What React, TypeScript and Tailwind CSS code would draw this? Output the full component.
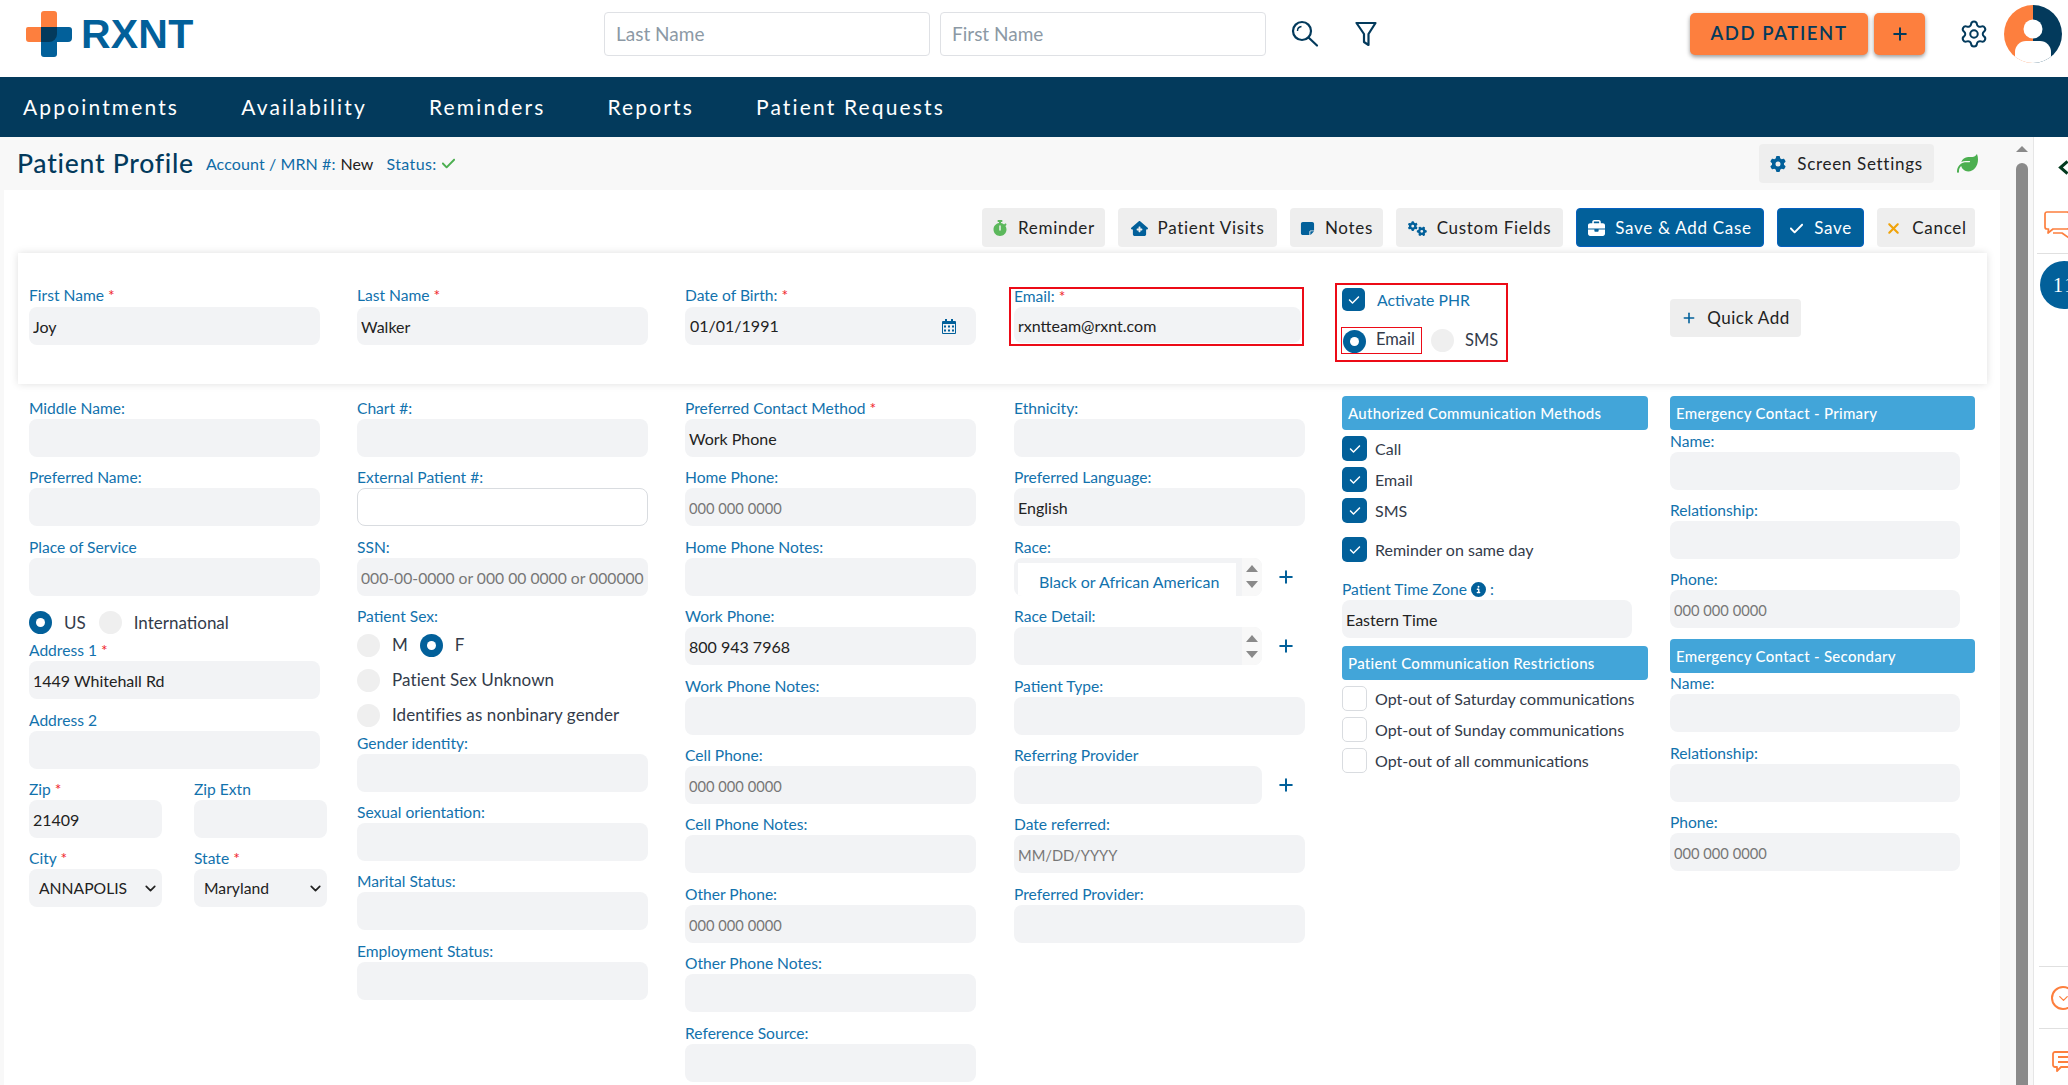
import React from "react";
import { Plus, Settings, ChevronDown } from "lucide-react";
import { FaStopwatch, FaHouseMedical, FaNoteSticky, FaGears, FaBriefcase, FaCheck, FaXmark, FaGear, FaLeaf, FaCircleInfo } from "react-icons/fa6";

function Label({ text, req, tall }: { text: string; req?: boolean; tall?: boolean }) {
  return (
    <div className={`text-[15.6px] leading-[21px] text-[#1272ad] whitespace-nowrap ${tall ? "h-[22px]" : "h-[21px]"}`}>
      {text}
      {req && <span className="text-[#f0262c]"> *</span>}
    </div>
  );
}

function Box({ value, placeholder, white, ssn, short }: { value?: string; placeholder?: string; white?: boolean; ssn?: boolean; short?: boolean }) {
  return (
    <input
      readOnly
      value={value ?? ""}
      placeholder={placeholder}
      className={`rounded-lg pl-[4px] pt-[1px] text-[16px] text-[#222] placeholder:text-[#777] outline-none block w-full ${short ? "h-[36px]" : "h-[38px]"} ${ssn ? "placeholder:text-[15.7px]" : "placeholder:text-[14.700px]"} ${white ? "bg-white border border-[#d9dce0]" : "bg-[#f2f3f5]"}`}
    />
  );
}

function Field({ label, req, value, placeholder, white, ssn, tall }: { label: string; req?: boolean; value?: string; placeholder?: string; white?: boolean; ssn?: boolean; tall?: boolean }) {
  return (
    <div className="h-[69.4px]">
      <Label text={label} req={req} tall={tall} />
      <Box value={value} placeholder={placeholder} white={white} ssn={ssn} />
    </div>
  );
}

function Radio({ on }: { on?: boolean }) {
  return (
    <span className={`w-[23px] h-[23px] rounded-full shrink-0 flex items-center justify-center ${on ? "bg-[#02609a]" : "bg-[#efefef]"}`}>
      {on && <span className="w-[9px] h-[9px] rounded-full bg-white" />}
    </span>
  );
}

function Check({ on }: { on?: boolean }) {
  return (
    <span className={`w-[25px] h-[25px] rounded-[5px] shrink-0 flex items-center justify-center ${on ? "bg-[#02609a]" : "bg-white border border-[#d9dce0]"}`}>
      {on && <FaCheck className="text-white text-[12px]" />}
    </span>
  );
}

function CheckRow({ on, text, className }: { on?: boolean; text: string; className?: string }) {
  return (
    <div className={`flex items-center gap-[8px] h-[25px] text-[16px] text-[#333b4a] whitespace-nowrap ${className ?? ""}`}>
      <Check on={on} />
      {text}
    </div>
  );
}

function SelectBox({ value }: { value: string }) {
  return (
    <div className="h-[38px] rounded-lg bg-[#f2f3f5] pl-[10px] pr-[3px] pt-[1px] flex items-center justify-between text-[15.7px] text-[#222]">
      {value}
      <ChevronDown size={17} strokeWidth={2.4} className="text-[#222]" />
    </div>
  );
}

function Head({ text }: { text: string }) {
  return (
    <div className="h-[34px] rounded-[4px] bg-[#42a5d9] text-white text-[15px] font-medium leading-[34px] pl-[6px] whitespace-nowrap tracking-[0.3px]">
      {text}
    </div>
  );
}

function Spinner() {
  return (
    <div className="w-[20px] flex flex-col items-center justify-center gap-[9px] bg-[#f8f8f8]">
      <span className="w-0 h-0 border-x-[6px] border-x-transparent border-b-[7px] border-b-[#8a8a8a]" />
      <span className="w-0 h-0 border-x-[6px] border-x-transparent border-t-[7px] border-t-[#8a8a8a]" />
    </div>
  );
}

function Btn({ icon, text, primary, className }: { icon: React.ReactNode; text: string; primary?: boolean; className?: string }) {
  return (
    <div className={`h-[39px] rounded-[4px] pt-[1px] flex items-center justify-center gap-[10px] text-[17px] tracking-[0.7px] whitespace-nowrap ${primary ? "bg-[#02609a] text-white border border-[#0560c0]" : "bg-[#eeeeee] text-[#222]"} ${className ?? ""}`}>
      {icon}
      {text}
    </div>
  );
}

export default function App() {
  return (
    <div className="w-[2068px] h-[1085px] overflow-hidden bg-white flex flex-col font-['Lato','Noto_Sans',sans-serif]">
      {/* Top bar */}
      <header className="h-[77px] shrink-0 flex items-center pl-[26px] pb-[9px] bg-white">
        <div className="w-[578px] flex items-center gap-[9px]">
          <svg width="46" height="46" viewBox="0 0 46 46" className="shrink-0">
            <path d="M18 0h10a3 3 0 0 1 3 3v13H15v15H3a3 3 0 0 1-3-3V18a2 2 0 0 1 2-2h13V3a3 3 0 0 1 3-3z" fill="#fd7f3e" />
            <path d="M15 16h28a3 3 0 0 1 3 3v8a4 4 0 0 1-4 4H31v12a3 3 0 0 1-3 3H18a3 3 0 0 1-3-3z" fill="#02609a" />
            <path d="M15 16h16v7a8 8 0 0 1-8 8h-8z" fill="#033a5c" />
          </svg>
          <span className="text-[41px] leading-none font-bold text-[#02609a] font-['Liberation_Sans',sans-serif] tracking-[0.2px]">RXNT</span>
        </div>
        <input placeholder="Last Name" readOnly className="w-[326px] h-[44px] rounded-[4px] border border-[#dfe1e5] pl-[11px] pb-[1px] text-[19px] placeholder:text-[#8c99a5] outline-none" />
        <input placeholder="First Name" readOnly className="ml-[10px] w-[326px] h-[44px] rounded-[4px] border border-[#dfe1e5] pl-[11px] pb-[1px] text-[19px] placeholder:text-[#8c99a5] outline-none" />
        <svg width="28" height="28" viewBox="0 0 28 28" fill="none" stroke="#033a5c" strokeWidth="2.2" className="ml-[25px] shrink-0">
          <circle cx="11" cy="11" r="9" />
          <path d="M17.500 17.500 26 25.500" strokeLinecap="round" />
          <path d="M6.500 11a4.500 4.500 0 0 1 4-4.500" strokeWidth="1.4" />
        </svg>
        <svg width="22" height="26" viewBox="0 0 22 26" fill="none" stroke="#033a5c" strokeWidth="2.2" strokeLinejoin="round" className="ml-[36px] shrink-0">
          <path d="M1.500 2h19l-7 11v11l-4.500-3v-8z" />
        </svg>
        <div className="ml-[313px] w-[178px] h-[42px] rounded-[5px] bg-[#fd7f3e] shadow-[0_2px_4px_rgba(0,0,0,0.4)] flex items-center justify-center text-[#033a5c] text-[18.500px] font-semibold tracking-[1.6px]">ADD PATIENT</div>
        <div className="ml-[6px] w-[51px] h-[42px] rounded-[5px] bg-[#fd7f3e] shadow-[0_2px_4px_rgba(0,0,0,0.4)] flex items-center justify-center text-[#033a5c]"><Plus size={20} strokeWidth={2.4} /></div>
        <Settings size={30} strokeWidth={1.6} className="ml-[34px] text-[#033a5c]" />
        <svg width="58" height="58" viewBox="0 0 58 58" className="ml-[15px] shrink-0">
          <clipPath id="av"><circle cx="29" cy="29" r="29" /></clipPath>
          <g clipPath="url(#av)">
            <rect width="29" height="58" fill="#fd7f3e" />
            <rect x="29" width="29" height="58" fill="#033a5c" />
            <circle cx="29" cy="24" r="9.5" fill="#fff" />
            <path d="M11 58V47a11 11 0 0 1 11-11h14a11 11 0 0 1 11 11v11z" fill="#fff" />
          </g>
        </svg>
      </header>

      {/* Navigation */}
      <nav className="h-[60px] shrink-0 bg-[#033a5c] pl-[23px] flex items-center gap-[62px] text-white text-[21px] tracking-[2.15px]">
        <span>Appointments</span>
        <span>Availability</span>
        <span>Reminders</span>
        <span>Reports</span>
        <span>Patient Requests</span>
      </nav>

      <div className="flex-1 flex min-h-0">
        <div className="w-[2010px] bg-[#f8f8f8] flex flex-col min-h-0">
          {/* Title bar */}
          <div className="h-[53px] shrink-0 flex items-center pl-[17px] pr-[32px]">
            <span className="text-[26.5px] tracking-[0.75px] text-[#033a5c] font-medium">Patient Profile</span>
            <span className="ml-[12px] text-[16px] tracking-[0.1px] text-[#0f6ba6]">Account / MRN #:</span>
            <span className="ml-[5px] text-[16px] text-[#222]">New</span>
            <span className="ml-[13px] text-[16px] tracking-[0.4px] text-[#0f6ba6]">Status:</span>
            <FaCheck className="ml-[4px] text-[#4caf50] text-[15px]" />
            <div className="ml-auto w-[175px] h-[39px] rounded-[4px] bg-[#eeeeee] flex items-center justify-center gap-[11px] text-[17px] tracking-[0.7px] text-[#222]">
              <FaGear className="text-[#02609a] text-[16px]" /> Screen Settings
            </div>
            <FaLeaf className="ml-[23px] text-[#4caf50] text-[21px]" />
          </div>

          {/* Panel */}
          <main className="flex-1 ml-[4px] w-[1996px] bg-white min-h-0 overflow-hidden">
            <div className="h-[63px] pt-[18px] pr-[25px] flex justify-end gap-[13px]">
              <Btn className="w-[123px]" icon={<FaStopwatch className="text-[#5cb85c] text-[16px]" />} text="Reminder" />
              <Btn className="w-[159px]" icon={<FaHouseMedical className="text-[#02609a] text-[17px]" />} text="Patient Visits" />
              <Btn className="w-[93px]" icon={<FaNoteSticky className="text-[#02609a] text-[15px]" />} text="Notes" />
              <Btn className="w-[167px]" icon={<FaGears className="text-[#02609a] text-[19px]" />} text="Custom Fields" />
              <Btn primary className="w-[188px]" icon={<FaBriefcase className="text-white text-[17px]" />} text="Save & Add Case" />
              <Btn primary className="w-[87px]" icon={<FaCheck className="text-white text-[15px]" />} text="Save" />
              <Btn className="w-[98px]" icon={<FaXmark className="text-[#f0a30a] text-[17px]" />} text="Cancel" />
            </div>

            {/* Required card */}
            <section className="ml-[14px] w-[1969px] h-[131px] bg-white shadow-[0_0_8px_rgba(0,0,0,0.13)] grid grid-cols-[328px_328px_329px_328px_328px_1fr] pl-[11px] pt-[32px]">
              <div className="w-[291px]"><Field label="First Name" req value="Joy" tall /></div>
              <div className="w-[291px]"><Field label="Last Name" req value="Walker" tall /></div>
              <div className="w-[291px]">
                <Label text="Date of Birth:" req tall />
                <div className="h-[38px] rounded-lg bg-[#f2f3f5] pl-[5px] pr-[20px] flex items-center justify-between text-[16px] text-[#222]">
                  01/01/1991
                  <svg width="14" height="15" viewBox="0 0 14 15" fill="#02609a"><path d="M3 0h2v2h4V0h2v2h2a1 1 0 0 1 1 1v11a1 1 0 0 1-1 1H1a1 1 0 0 1-1-1V3a1 1 0 0 1 1-1h2zM1 5v9h12V5zm1 1.500h2v2H2zm4 0h2v2H6zm4 0h2v2h-2zM2 10.500h2v2H2zm4 0h2v2H6zm4 0h2v2h-2z" /></svg>
                </div>
              </div>
              <div className="w-[295px] -ml-[5px] h-[59px] mt-[2px] border-2 border-[#ec0b17] pl-[3px] pr-[1px] overflow-hidden">
                <div className="h-[18px] text-[15.6px] leading-[15px] text-[#1272ad] whitespace-nowrap">Email:<span className="text-[#f0262c]"> *</span></div>
                <Box value="rxntteam@rxnt.com" short />
              </div>
              <div className="w-[173px] h-[79px] -ml-[7px] -mt-[2px] border-2 border-[#ec0b17] pl-[5px] pt-[3px]">
                <div className="flex items-center gap-[12px] h-[23px] text-[15.8px] text-[#1272ad] whitespace-nowrap">
                  <span className="w-[23px] h-[23px] rounded-[5px] bg-[#02609a] flex items-center justify-center"><FaCheck className="text-white text-[12px]" /></span>
                  Activate PHR
                </div>
                <div className="flex items-center mt-[16px] -ml-[1px] text-[16.5px] text-[#333b4a]">
                  <div className="w-[81px] h-[26px] border-x border-t border-[#ec0b17] shadow-[0_1px_0_#ec0b17] flex items-end gap-[10px] pl-[1px]"><Radio on /><span className="mb-[1px]">Email</span></div>
                  <div className="ml-[9px] flex items-center gap-[11px] pt-[1px]"><Radio /> SMS</div>
                </div>
              </div>
              <div className="pt-[14px]">
                <div className="w-[131px] h-[38px] rounded-[4px] bg-[#eeeeee] flex items-center justify-center gap-[10px] text-[17px] tracking-[0.5px] text-[#222]">
                  <Plus size={16} strokeWidth={2.4} className="text-[#02609a]" /> Quick Add
                </div>
              </div>
            </section>

            {/* Fields */}
            <section className="grid grid-cols-[328px_328px_329px_328px_328px_1fr] ml-[25px] mt-[12px]">
              <div className="w-[291px] pt-[2px]">
                <Field label="Middle Name:" />
                <Field label="Preferred Name:" />
                <Field label="Place of Service" />
                <div className="flex items-center h-[23px] mt-[5px] mb-[6px] text-[17px] text-[#333b4a]">
                  <Radio on /><span className="ml-[12px]">US</span>
                  <span className="ml-[13px]"><Radio /></span><span className="ml-[12px]">International</span>
                </div>
                <Field label="Address 1" req value="1449 Whitehall Rd" />
                <Field label="Address 2" />
                <div className="grid grid-cols-[133px_133px] gap-x-[32px] w-[298px]">
                  <Field label="Zip" req value="21409" />
                  <Field label="Zip Extn" />
                  <div><Label text="City" req /><SelectBox value="ANNAPOLIS" /></div>
                  <div><Label text="State" req /><SelectBox value="Maryland" /></div>
                </div>
              </div>

              <div className="w-[291px] pt-[2px]">
                <Field label="Chart #:" />
                <Field label="External Patient #:" white />
                <Field label="SSN:" placeholder="000-00-0000 or 000 00 0000 or 000000" ssn />
                <Label text="Patient Sex:" />
                <div className="flex items-center mt-[6.500px] h-[23px] text-[17px] text-[#333b4a]">
                  <Radio /><span className="ml-[12px]">M</span>
                  <span className="ml-[12px]"><Radio on /></span><span className="ml-[12px]">F</span>
                </div>
                <div className="flex items-center gap-[12px] mt-[12px] h-[23px] text-[17px] tracking-[0.1px] text-[#333b4a]"><Radio /> Patient Sex Unknown</div>
                <div className="flex items-center gap-[12px] mt-[12px] mb-[6px] h-[23px] text-[17px] tracking-[0.1px] text-[#333b4a] whitespace-nowrap"><Radio /> Identifies as nonbinary gender</div>
                <Field label="Gender identity:" />
                <Field label="Sexual orientation:" />
                <Field label="Marital Status:" />
                <Field label="Employment Status:" />
              </div>

              <div className="w-[291px] pt-[2px]">
                <Field label="Preferred Contact Method" req value="Work Phone" />
                <Field label="Home Phone:" placeholder="000 000 0000" />
                <Field label="Home Phone Notes:" />
                <Field label="Work Phone:" value="800 943 7968" />
                <Field label="Work Phone Notes:" />
                <Field label="Cell Phone:" placeholder="000 000 0000" />
                <Field label="Cell Phone Notes:" />
                <Field label="Other Phone:" placeholder="000 000 0000" />
                <Field label="Other Phone Notes:" />
                <Field label="Reference Source:" />
              </div>

              <div className="w-[291px] pt-[2px]">
                <Field label="Ethnicity:" />
                <Field label="Preferred Language:" value="English" />
                <div className="h-[69.4px]">
                  <Label text="Race:" />
                  <div className="flex items-center">
                    <div className="w-[248px] h-[38px] rounded-lg bg-[#f2f3f5] flex pl-[4px] overflow-hidden">
                      <div className="mt-[5px] w-[218px] h-[33px] bg-white pl-[21px] text-[16px] leading-[38px] text-[#1272ad] whitespace-nowrap">Black or African American</div>
                      <div className="flex-1 flex justify-end"><Spinner /></div>
                    </div>
                    <Plus size={20} strokeWidth={2.4} className="ml-[14px] text-[#02609a]" />
                  </div>
                </div>
                <div className="h-[69.4px]">
                  <Label text="Race Detail:" />
                  <div className="flex items-center">
                    <div className="w-[248px] h-[38px] rounded-lg bg-[#f2f3f5] flex justify-end overflow-hidden"><Spinner /></div>
                    <Plus size={20} strokeWidth={2.4} className="ml-[14px] text-[#02609a]" />
                  </div>
                </div>
                <Field label="Patient Type:" />
                <div className="h-[69.4px]">
                  <Label text="Referring Provider" />
                  <div className="flex items-center">
                    <div className="w-[248px] h-[38px] rounded-lg bg-[#f2f3f5]" />
                    <Plus size={20} strokeWidth={2.4} className="ml-[14px] text-[#02609a]" />
                  </div>
                </div>
                <Field label="Date referred:" placeholder="MM/DD/YYYY" />
                <Field label="Preferred Provider:" />
              </div>

              <div className="w-[306px]">
                <Head text="Authorized Communication Methods" />
                <CheckRow on text="Call" className="mt-[6px]" />
                <CheckRow on text="Email" className="mt-[6px]" />
                <CheckRow on text="SMS" className="mt-[6px]" />
                <CheckRow on text="Reminder on same day" className="mt-[14px]" />
                <div className="mt-[17px] flex items-center h-[21px] text-[15.6px] text-[#1272ad]">
                  Patient Time Zone
                  <FaCircleInfo className="ml-[4px] text-[#02609a] text-[15px]" />
                  <span className="ml-[4px]">:</span>
                </div>
                <div className="w-[290px]"><Box value="Eastern Time" /></div>
                <div className="mt-[8px]"><Head text="Patient Communication Restrictions" /></div>
                <CheckRow text="Opt-out of Saturday communications" className="mt-[6px]" />
                <CheckRow text="Opt-out of Sunday communications" className="mt-[6px]" />
                <CheckRow text="Opt-out of all communications" className="mt-[6px]" />
              </div>

              <div className="w-[305px]">
                <Head text="Emergency Contact - Primary" />
                <div className="w-[290px] pt-[0.500px]">
                  <Field label="Name:" />
                  <Field label="Relationship:" />
                  <Field label="Phone:" placeholder="000 000 0000" />
                </div>
                <Head text="Emergency Contact - Secondary" />
                <div className="w-[290px] pt-[0.500px]">
                  <Field label="Name:" />
                  <Field label="Relationship:" />
                  <Field label="Phone:" placeholder="000 000 0000" />
                </div>
              </div>
            </section>
          </main>
        </div>

        {/* Page scrollbar */}
        <div className="w-[23px] bg-[#f8f8f8] flex flex-col items-center pt-[9px]">
          <span className="w-0 h-0 border-x-[6px] border-x-transparent border-b-[6px] border-b-[#8a8a8a]" />
          <span className="mt-[11px] flex-1 w-[12px] rounded-t-[6px] bg-[#8a8a8a]" />
        </div>

        {/* Right rail */}
        <aside className="w-[35px] border-l border-[#e6e6e6] bg-white flex flex-col overflow-hidden">
          <svg width="11" height="15" viewBox="0 0 11 15" fill="none" stroke="#033a1f" strokeWidth="3" className="ml-[24px] mt-[23px] shrink-0">
            <path d="M9.500 1.500 2.500 7.500l7 6" />
          </svg>
          <svg width="28" height="28" viewBox="0 0 28 28" fill="none" stroke="#fd7f3e" strokeWidth="1.700" strokeLinejoin="round" className="ml-[10px] mt-[36px] shrink-0">
            <path d="M3 1h20a2 2 0 0 1 2 2v13a2 2 0 0 1-2 2H9l-5 4 .5-4H3a2 2 0 0 1-2-2V3a2 2 0 0 1 2-2z" />
            <path d="M9 22h9l7 5v-4" />
          </svg>
          <div className="mt-[14px] ml-[3px] w-[40px] h-px bg-[#e0e0e0] shrink-0" />
          <div className="ml-[6px] mt-[7px] w-[48px] h-[48px] rounded-full bg-[#02609a] text-white text-[20px] leading-[48px] pl-[13px] shrink-0 font-['Liberation_Serif',serif] tracking-[2px]">11</div>
          <div className="mt-[657px] ml-[5px] w-[40px] h-px bg-[#e0e0e0] shrink-0" />
          <div className="ml-[17px] mt-[19px] w-[24px] h-[24px] rounded-full border-2 border-[#fd7f3e] shrink-0 flex items-center justify-center">
            <ChevronDown size={15} className="text-[#fd7f3e]" />
          </div>
          <div className="mt-[18px] ml-[5px] w-[40px] h-px bg-[#e0e0e0] shrink-0" />
          <svg width="24" height="22" viewBox="0 0 24 22" fill="none" stroke="#fd7f3e" strokeWidth="1.800" strokeLinejoin="round" className="ml-[18px] mt-[22px] shrink-0">
            <path d="M3 1h18a2 2 0 0 1 2 2v11a2 2 0 0 1-2 2H9l-4 4v-4H3a2 2 0 0 1-2-2V3a2 2 0 0 1 2-2z" />
            <path d="M6 6h14M6 11h14" />
          </svg>
        </aside>
      </div>
    </div>
  );
}
